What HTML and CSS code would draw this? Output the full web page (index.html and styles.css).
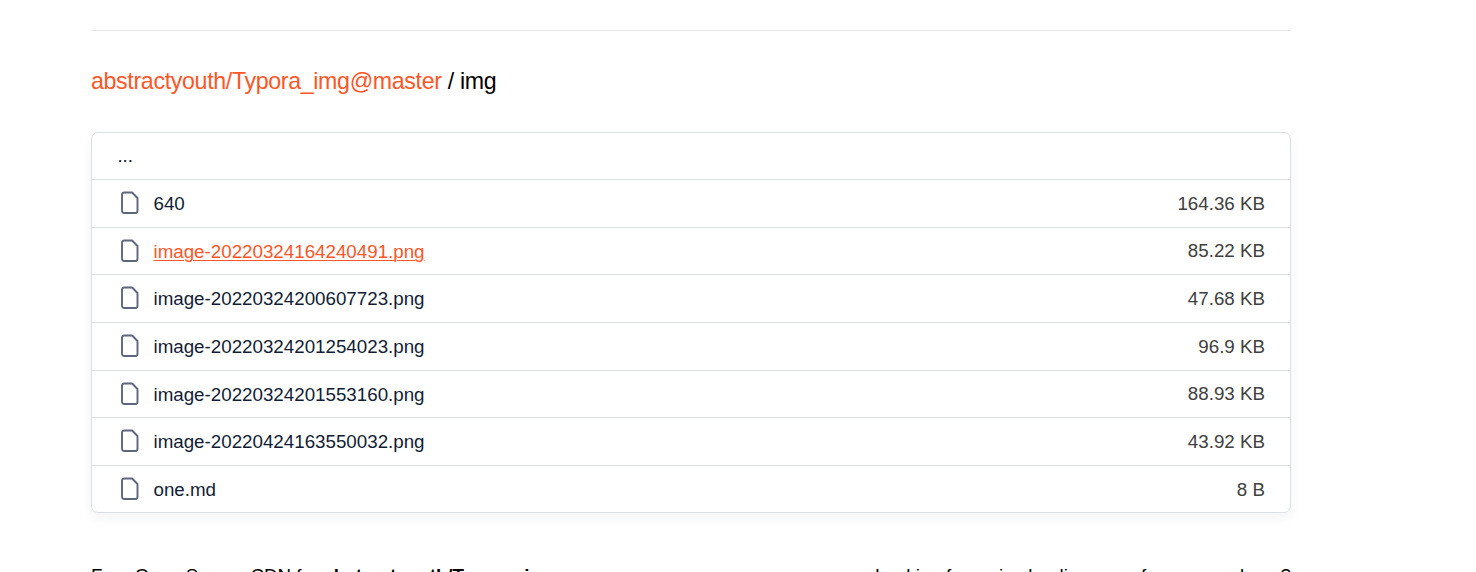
FILE: index.html
```html
<!DOCTYPE html>
<html lang="en">
<head>
<meta charset="utf-8">
<title>abstractyouth/Typora_img</title>
<link rel="stylesheet" href="styles.css">
</head>
<body>
<svg class="sprite" aria-hidden="true">
  <symbol id="file" viewBox="0 0 20 24">
    <path d="M4.2 1.5h7.9L17.5 7v12.8a2.2 2.2 0 0 1-2.2 2.2H4.2A2.2 2.2 0 0 1 2 19.8V3.7a2.2 2.2 0 0 1 2.2-2.2z" fill="none" stroke="#5c667e" stroke-width="1.9" stroke-linejoin="round"/>
  </symbol>
</svg>
<main class="page">
  <h1 class="path"><a class="repo" href="#">abstractyouth/Typora_img@master</a> / img</h1>
  <ul class="files">
    <li class="row"><a class="name" href="#">...</a></li>
    <li class="row"><svg class="icon"><use href="#file"/></svg><a class="name" href="#">640</a><span class="size">164.36 KB</span></li>
    <li class="row"><svg class="icon"><use href="#file"/></svg><a class="name active" href="#">image-20220324164240491.png</a><span class="size">85.22 KB</span></li>
    <li class="row"><svg class="icon"><use href="#file"/></svg><a class="name" href="#">image-20220324200607723.png</a><span class="size">47.68 KB</span></li>
    <li class="row"><svg class="icon"><use href="#file"/></svg><a class="name" href="#">image-20220324201254023.png</a><span class="size">96.9 KB</span></li>
    <li class="row"><svg class="icon"><use href="#file"/></svg><a class="name" href="#">image-20220324201553160.png</a><span class="size">88.93 KB</span></li>
    <li class="row"><svg class="icon"><use href="#file"/></svg><a class="name" href="#">image-20220424163550032.png</a><span class="size">43.92 KB</span></li>
    <li class="row"><svg class="icon"><use href="#file"/></svg><a class="name" href="#">one.md</a><span class="size">8 B</span></li>
  </ul>
  <footer class="footer">
    <span>Free Open Source CDN for <b>abstractyouth/Typora_img</b></span>
    <span>Looking for a nice landing page for your package?</span>
  </footer>
</main>
</body>
</html>
```
FILE: styles.css
```css
* { box-sizing: border-box; }
html { height: 100%; overflow: hidden; }
body {
  margin: 0;
  height: 100%;
  overflow: hidden;
  background: #fff;
  color: #000;
  font-family: "Liberation Sans", Arial, sans-serif;
  font-size: 18.75px;
}
.sprite { display: none; }
.page {
  width: 1200px;
  margin: 30px 0 0 91px;
  border-top: 1px solid #e5e5e5;
}
.path {
  margin: 36px 0 0;
  font-size: 23.2px;
  font-weight: 400;
  line-height: 29px;
  letter-spacing: -0.34px;
}
.repo { color: #ff5627; text-decoration: none; }
.files {
  list-style: none;
  margin: 36px 0 0;
  padding: 0;
  border: 1px solid #dddfe6;
  border-radius: 7px;
  box-shadow: 0 5px 12px rgba(27, 51, 93, 0.06);
}
.row {
  display: flex;
  align-items: center;
  height: 47.65px;
  padding: 0.9px 25px 0 25.4px;
  border-bottom: 1px solid #dddfe6;
}
.row:first-child { height: 47px; padding-top: 0; }
.row:last-child { height: 46.6px; border-bottom: 0; padding-top: 1.4px; }
.icon { width: 20px; height: 24px; margin: 0 13.4px 1.5px 2.7px; }
.name { color: #111d35; text-decoration: none; line-height: 24px; }
.icon + .name { margin-top: 0.5px; }
.active {
  color: #ff5627;
  text-decoration: underline;
  text-decoration-thickness: 1px;
  text-underline-offset: 2px;
}
.size { margin-left: auto; color: #404040; line-height: 24px; }
.footer {
  display: flex;
  justify-content: space-between;
  margin-top: 51px;
  line-height: 24px;
}
```
